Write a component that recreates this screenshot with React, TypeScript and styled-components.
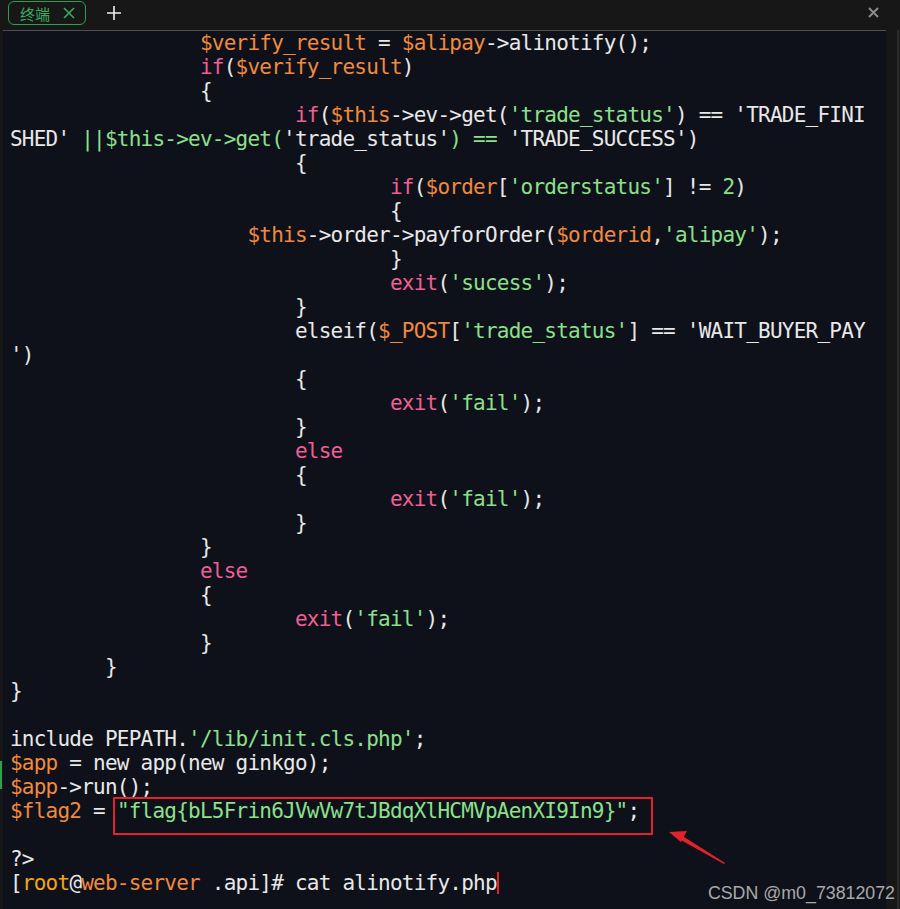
import React from 'react';
import styled, { createGlobalStyle } from 'styled-components';

type Tone = 'w' | 'o' | 'p' | 'g' | 'y';
type Token = [string, Tone];

const palette: Record<Tone, string> = {
  w: '#e8e8e8',
  o: '#f08a3e',
  p: '#ef5f95',
  g: '#8ce08c',
  y: '#f2a614',
};

const T1 = '        ';
const T2 = T1 + T1;
const T3 = T2 + T1;
const T4 = T3 + T1;

const lines: Token[][] = [
  [[T2, 'w'], ['$verify_result', 'o'], [' = ', 'w'], ['$alipay', 'o'], ['->alinotify();', 'w']],
  [[T2, 'w'], ['if', 'p'], ['(', 'w'], ['$verify_result', 'o'], [')', 'w']],
  [[T2 + '{', 'w']],
  [
    [T3, 'w'],
    ['if', 'p'],
    ['(', 'w'],
    ['$this', 'o'],
    ['->ev->get(', 'w'],
    ["'trade_status'", 'g'],
    [") == 'TRADE_FINI", 'w'],
  ],
  [["SHED'", 'w'], [' ||$this->ev->get(', 'g'], ["'trade_status'", 'w'], [') ==', 'g'], [" 'TRADE_SUCCESS')", 'w']],
  [[T3 + '{', 'w']],
  [
    [T4, 'w'],
    ['if', 'p'],
    ['(', 'w'],
    ['$order', 'o'],
    ['[', 'w'],
    ["'orderstatus'", 'g'],
    ['] != ', 'w'],
    ['2', 'g'],
    [')', 'w'],
  ],
  [[T4 + '{', 'w']],
  [
    [T2 + '    ', 'w'],
    ['$this', 'o'],
    ['->order->payforOrder(', 'w'],
    ['$orderid', 'o'],
    [',', 'w'],
    ["'alipay'", 'g'],
    [');', 'w'],
  ],
  [[T4 + '}', 'w']],
  [[T4, 'w'], ['exit', 'p'], ['(', 'w'], ["'sucess'", 'g'], [');', 'w']],
  [[T3 + '}', 'w']],
  [
    [T3 + 'elseif(', 'w'],
    ['$_POST', 'o'],
    ['[', 'w'],
    ["'trade_status'", 'g'],
    ["] == 'WAIT_BUYER_PAY", 'w'],
  ],
  [["')", 'w']],
  [[T3 + '{', 'w']],
  [[T4, 'w'], ['exit', 'p'], ['(', 'w'], ["'fail'", 'g'], [');', 'w']],
  [[T3 + '}', 'w']],
  [[T3, 'w'], ['else', 'p']],
  [[T3 + '{', 'w']],
  [[T4, 'w'], ['exit', 'p'], ['(', 'w'], ["'fail'", 'g'], [');', 'w']],
  [[T3 + '}', 'w']],
  [[T2 + '}', 'w']],
  [[T2, 'w'], ['else', 'p']],
  [[T2 + '{', 'w']],
  [[T3, 'w'], ['exit', 'p'], ['(', 'w'], ["'fail'", 'g'], [');', 'w']],
  [[T2 + '}', 'w']],
  [[T1 + '}', 'w']],
  [['}', 'w']],
  [],
  [['include PEPATH.', 'w'], ["'/lib/init.cls.php'", 'g'], [';', 'w']],
  [['$app', 'o'], [' = new app(new ginkgo);', 'w']],
  [['$app', 'o'], ['->run();', 'w']],
  [['$flag2', 'o'], [' = ', 'w'], ['"flag{bL5Frin6JVwVw7tJBdqXlHCMVpAenXI9In9}"', 'g'], [';', 'w']],
  [],
  [['?>', 'w']],
];

const GlobalStyle = createGlobalStyle`
  html, body {
    margin: 0;
    padding: 0;
    background: #171717;
  }
`;

const Window = styled.div`
  position: relative;
  width: 900px;
  height: 909px;
  display: flex;
  flex-direction: column;
  background: #171717;
  overflow: hidden;
`;

const TabBar = styled.div`
  height: 30px;
  flex: none;
  display: flex;
  align-items: flex-start;
  padding: 1px 21px 0 8px;
  box-sizing: border-box;
`;

const Tab = styled.div`
  width: 78px;
  height: 24px;
  box-sizing: border-box;
  border: 1px solid #2f9d55;
  border-radius: 6px;
  display: flex;
  align-items: center;
  padding-left: 11px;
  gap: 13px;
  color: #3aaa60;
  font-family: 'Noto Sans CJK SC', 'Noto Sans', sans-serif;
  font-size: 15px;
`;

const IconButton = styled.div<{ $push?: boolean; $top: number }>`
  display: flex;
  margin-left: ${({ $push }) => ($push ? 'auto' : '21px')};
  margin-top: ${({ $top }) => $top}px;
`;

const Main = styled.div`
  flex: 1;
  display: flex;
  min-height: 0;
`;

const Gutter = styled.div`
  position: relative;
  width: 3px;
  flex: none;
`;

const ChangeMark = styled.div`
  position: absolute;
  left: 0;
  top: 731px;
  width: 2px;
  height: 28px;
  background: #2fa24c;
`;

const Pane = styled.div`
  position: relative;
  flex: 1;
  background: #0e111a;
  border-top: 1px solid #4f4f4f;
  padding-left: 7px;
  font-family: 'DejaVu Sans Mono', 'Liberation Mono', monospace;
  font-size: 21px;
  letter-spacing: -0.77px;
`;

const Strip = styled.div`
  width: 13px;
  flex: none;
  box-sizing: border-box;
  border-right: 2px solid #2c2c2c;
  margin-right: 1px;
`;

const Line = styled.div`
  height: 24px;
  line-height: 24px;
  white-space: pre;
  color: ${palette.w};
`;

const Tok = styled.span<{ $tone: Tone }>`
  color: ${({ $tone }) => palette[$tone]};
`;

const Cursor = styled.span`
  display: inline-block;
  width: 0;
  height: 22px;
  vertical-align: -4px;
  border-left: 2px solid #e0202a;
`;

const Highlight = styled.div`
  position: absolute;
  left: 110px;
  top: 766px;
  width: 540px;
  height: 38px;
  box-sizing: border-box;
  border: 2px solid #e3222b;
`;

const Arrow = styled.svg`
  position: absolute;
  left: 664px;
  top: 795px;
`;

const Watermark = styled.div`
  position: absolute;
  right: 5px;
  top: 883px;
  line-height: 20px;
  font-family: 'Liberation Sans', Arial, sans-serif;
  font-size: 17.8px;
  color: #a9a9a9;
`;

export default function App() {
  return (
    <>
      <GlobalStyle />
      <Window>
        <TabBar>
          <Tab>
            终端
            <svg width="12" height="12" viewBox="0 0 12 12">
              <path d="M1 1 L11 11 M11 1 L1 11" stroke="#3aaa60" strokeWidth="1.6" />
            </svg>
          </Tab>
          <IconButton $top={5}>
            <svg width="14" height="14" viewBox="0 0 14 14">
              <path d="M7 0 V14 M0 7 H14" stroke="#f0f0f0" strokeWidth="1.6" />
            </svg>
          </IconButton>
          <IconButton $push $top={6}>
            <svg width="11" height="11" viewBox="0 0 11 11">
              <path d="M1 1 L10 10 M10 1 L1 10" stroke="#8c8c8c" strokeWidth="2" />
            </svg>
          </IconButton>
        </TabBar>
        <Main>
          <Gutter>
            <ChangeMark />
          </Gutter>
          <Pane>
            {lines.map((tokens, i) => (
              <Line key={i}>
                {tokens.map(([text, tone], j) => (
                  <Tok key={j} $tone={tone}>
                    {text}
                  </Tok>
                ))}
              </Line>
            ))}
            <Line>
              [<Tok $tone="y">root</Tok>@<Tok $tone="o">web-server</Tok> .api]# cat alinotify.php
              <Cursor />
            </Line>
            <Highlight />
            <Arrow width="64" height="42" viewBox="0 0 64 42">
              <polygon points="2,6 20,5 14,16" fill="#e3222b" />
              <polygon points="14,9 58,37 57,38 12,13" fill="#e3222b" />
            </Arrow>
          </Pane>
          <Strip />
        </Main>
        <Watermark>CSDN @m0_73812072</Watermark>
      </Window>
    </>
  );
}
